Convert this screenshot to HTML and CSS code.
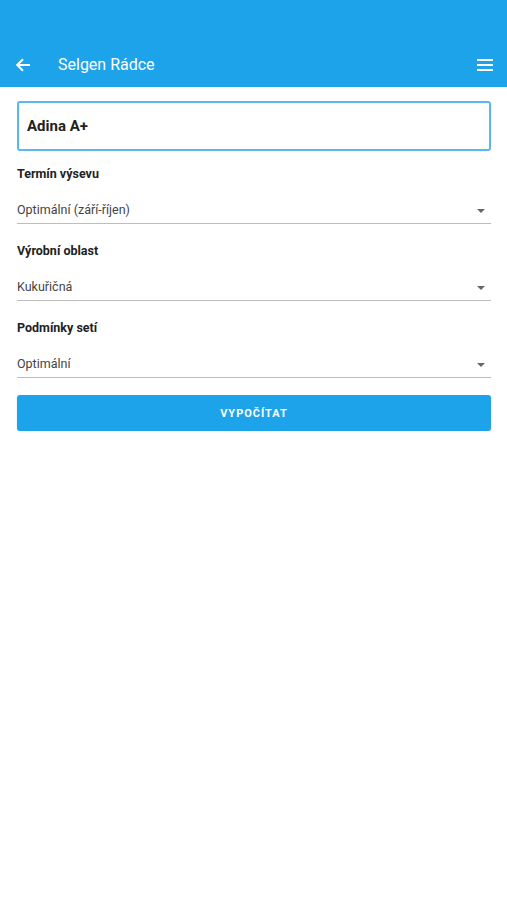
FILE: index.html
```html
<!DOCTYPE html>
<html lang="cs">
<head>
    <meta charset="UTF-8">
    <meta name="viewport" content="width=device-width, initial-scale=1.0">
    <title>Selgen Rádce</title>
    <link rel="stylesheet" href="styles.css">
</head>
<body>
    <header class="toolbar">
        <button class="icon-btn" aria-label="Zpět">
            <svg width="16" height="16" viewBox="0 0 16 16"><path d="M15 8H2.5M8 2.2L2.2 8 8 13.8" fill="none" stroke="#fff" stroke-width="2"/></svg>
        </button>
        <h1 class="title">Selgen Rádce</h1>
        <button class="icon-btn menu" aria-label="Menu">
            <svg width="16" height="12" viewBox="0 0 16 12"><path d="M0 1h16M0 6h16M0 11h16" stroke="#fff" stroke-width="2"/></svg>
        </button>
    </header>

    <main class="content">
        <div class="variety">Adina A+</div>

        <div class="field">
            <label>Termín výsevu</label>
            <div class="select">
                <span>Optimální (září-říjen)</span>
                <i class="caret"></i>
            </div>
        </div>

        <div class="field">
            <label>Výrobní oblast</label>
            <div class="select">
                <span>Kukuřičná</span>
                <i class="caret"></i>
            </div>
        </div>

        <div class="field">
            <label>Podmínky setí</label>
            <div class="select">
                <span>Optimální</span>
                <i class="caret"></i>
            </div>
        </div>

        <button class="submit">VYPOČÍTAT</button>
    </main>
</body>
</html>
```

FILE: styles.css
```css
body {
    margin: 0;
    padding: 0;
    font-family: Roboto, "Noto Sans", sans-serif;
    background: #fff;
    color: #222;
}
.toolbar {
    height: 87px;
    background-color: #1ca3ea;
    display: flex;
    align-items: flex-end;
    padding: 0 7px 7px 8px;
    box-sizing: border-box;
}
.icon-btn {
    background: none;
    border: none;
    padding: 0;
    width: 30px;
    height: 30px;
    display: flex;
    align-items: center;
    justify-content: center;
}
.title {
    flex: 1;
    margin: 0 0 0 20px;
    font-size: 16px;
    font-weight: 400;
    color: #fff;
    line-height: 30px;
}
.content {
    padding: 14px 16px 0 17px;
}
.variety {
    height: 50px;
    border: 2px solid #5ab9ec;
    border-radius: 3px;
    box-sizing: border-box;
    padding-left: 8px;
    display: flex;
    align-items: center;
    font-size: 15px;
    font-weight: 700;
    color: #222;
}
.field {
    margin-top: 19px;
}
.variety + .field {
    margin-top: 15px;
}
.field label {
    display: block;
    font-size: 12.5px;
    font-weight: 700;
    color: #222;
    line-height: 16px;
}
.select {
    margin-top: 20px;
    height: 22px;
    border-bottom: 1px solid #bdbdbd;
    display: flex;
    align-items: flex-start;
    justify-content: space-between;
    font-size: 12.5px;
    color: #444;
    line-height: 16px;
    box-sizing: border-box;
}
.caret {
    width: 0;
    height: 0;
    border-left: 4px solid transparent;
    border-right: 4px solid transparent;
    border-top: 4px solid #666;
    margin: 7px 6px 0 0;
}
.submit {
    margin-top: 17px;
    width: 100%;
    height: 36px;
    background-color: #1ca3ea;
    color: #fff;
    border: none;
    border-radius: 3px;
    font-family: Roboto, sans-serif;
    font-size: 11px;
    font-weight: 700;
    letter-spacing: 1px;
    box-shadow: 0 1px 2px rgba(0, 0, 0, 0.15);
}
```
